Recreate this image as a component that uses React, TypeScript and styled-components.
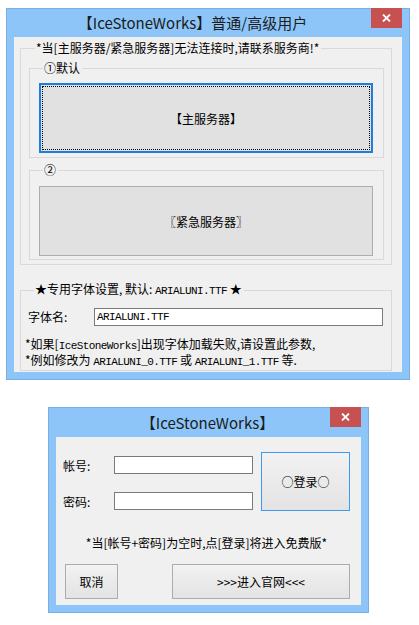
import styled, { createGlobalStyle, css } from 'styled-components';

/* -------- Global -------- */
const GlobalStyle = createGlobalStyle`
  body {
    margin: 0;
    background: #ffffff;
    font-family: "Noto Sans CJK SC", "Noto Sans", sans-serif;
    font-size: 12px;
    color: #000000;
  }
`;

/* -------- Window frame -------- */
const Page = styled.div`
  display: flex;
  flex-direction: column;
  align-items: flex-start;
  padding: 8px 0 0 6px;
`;

const Window = styled.div<{ $width: number; $height: number }>`
  box-sizing: border-box;
  width: ${p => p.$width}px;
  height: ${p => p.$height}px;
  display: flex;
  flex-direction: column;
  background: #8dc5f8;
  border: 1px solid #79b0e3;
  padding: 0 7px 7px 7px;
`;

const LoginWindow = styled(Window)`
  margin: 27px 0 0 42px;
`;

const TitleBar = styled.div<{ $height: number }>`
  display: flex;
  height: ${p => p.$height}px;
  flex-shrink: 0;
`;

const Title = styled.div<{ $offset?: number }>`
  flex: 1;
  align-self: center;
  text-align: center;
  padding-left: ${p => p.$offset || 0}px;
  font-size: 15px;
  line-height: 18px;
  color: #1c1c1c;
`;

const CloseButton = styled.div`
  width: 31px;
  height: 20px;
  margin-top: -1px;
  background: #c75050;
  display: flex;
  align-items: center;
  justify-content: center;
  & svg {
    width: 9px;
    height: 8px;
  }
`;

const MainClient = styled.div`
  flex: 1;
  background: #f0f0f0;
  padding: 4px 10px 0 6px;
  display: flex;
  flex-direction: column;
`;

const LoginClient = styled.div`
  flex: 1;
  background: #f0f0f0;
  padding: 15px 11px 0 7px;
  display: flex;
  flex-direction: column;
`;

/* -------- Group boxes -------- */
const Group = styled.fieldset<{ $pad: string; $gap?: number }>`
  margin: ${p => p.$gap || 0}px 0 0 0;
  padding: ${p => p.$pad};
  border: 1px solid #d9d9d9;
  min-width: 0;
  display: flex;
  flex-direction: column;
`;

const Legend = styled.legend<{ $indent?: number }>`
  margin-left: ${p => p.$indent ?? 6}px;
  padding: 0 2px 0 1px;
  font-size: 12px;
  line-height: 14px;
`;

const Mono = styled.span`
  font-family: "Liberation Mono", monospace;
  font-size: 11px;
  letter-spacing: -0.6px;
`;

/* -------- Buttons -------- */
const ServerButton = styled.button<{ $focused?: boolean }>`
  box-sizing: border-box;
  width: 100%;
  height: 70px;
  margin: 0;
  padding: 0;
  display: flex;
  align-items: center;
  justify-content: center;
  background: #e1e1e1;
  border: 1px solid #adadad;
  font-family: "Noto Sans CJK SC", sans-serif;
  font-size: 12px;
  color: #000000;
  ${p => p.$focused && css`
    border: 2px solid #1f7fd8;
    outline: 1px dotted #000000;
    outline-offset: -4px;
  `}
`;

const FormButton = styled.button<{ $width: number; $height: number; $default?: boolean }>`
  box-sizing: border-box;
  width: ${p => p.$width}px;
  height: ${p => p.$height}px;
  margin: 0;
  padding: 0;
  display: flex;
  align-items: center;
  justify-content: center;
  background: linear-gradient(#f2f2f2, #e3e3e3);
  border: 1px solid ${p => p.$default ? '#3d9bef' : '#acacac'};
  font-family: "Noto Sans CJK SC", sans-serif;
  font-size: 12px;
  color: #000000;
`;

/* -------- Font settings -------- */
const FontRow = styled.div`
  display: flex;
  align-items: center;
`;

const FontLabel = styled.span`
  width: 66px;
  line-height: 14px;
`;

const TextBox = styled.input<{ $width?: number; $mono?: boolean }>`
  box-sizing: border-box;
  height: 18px;
  margin: 0;
  padding: 0 2px;
  border: 1px solid #7a7a7a;
  background: #ffffff;
  outline: none;
  font-family: ${p => p.$mono ? '"Liberation Mono", monospace' : '"Noto Sans CJK SC", sans-serif'};
  font-size: ${p => p.$mono ? '11px' : '12px'};
  letter-spacing: ${p => p.$mono ? '-0.6px' : 'normal'};
  color: #000000;
  ${p => p.$width ? `width: ${p.$width}px;` : 'flex: 1;'}
`;

const Notes = styled.div`
  margin: 11px 0 0 -3px;
  line-height: 13px;
  white-space: nowrap;
`;

/* -------- Login form -------- */
const LoginRow = styled.div`
  display: flex;
  align-items: flex-start;
`;

const Fields = styled.div`
  display: flex;
  flex-direction: column;
  gap: 18px;
  margin: 4px 8px 0 0;
`;

const Field = styled.div`
  display: flex;
  align-items: center;
`;

const FieldLabel = styled.span`
  width: 51px;
  font-size: 12px;
`;

const Notice = styled.div`
  margin-top: 25px;
  text-align: center;
  line-height: 14px;
`;

const ActionRow = styled.div`
  display: flex;
  justify-content: space-between;
  margin: 14px 0 0 2px;
`;

function CloseIcon() {
  return (
    <svg viewBox="0 0 9 8">
      <path d="M1 0.5 L8 7.5 M8 0.5 L1 7.5" stroke="#ffffff" strokeWidth="1.8" />
    </svg>
  );
}

function App() {
  return (
    <Page>
      <GlobalStyle />
      <Window $width={404} $height={372}>
        <TitleBar $height={28}>
          <Title>【IceStoneWorks】普通/高级用户</Title>
          <CloseButton><CloseIcon /></CloseButton>
        </TitleBar>
        <MainClient>
          <Group $pad="6px 7px 4px 8px">
            <Legend>*当[主服务器/紧急服务器]无法连接时,请联系服务商!*</Legend>
            <Group $pad="8px 10px 4px 9px">
              <Legend $indent={4}>①默认</Legend>
              <ServerButton $focused>【主服务器】</ServerButton>
            </Group>
            <Group $pad="9px 10px 3px 9px" $gap={5}>
              <Legend $indent={4}>②</Legend>
              <ServerButton>〖紧急服务器〗</ServerButton>
            </Group>
          </Group>
          <Group $pad="10px 8px 1px 7px" $gap={17}>
            <Legend>★专用字体设置, 默认: <Mono>ARIALUNI.TTF</Mono> ★</Legend>
            <FontRow>
              <FontLabel>字体名:</FontLabel>
              <TextBox $mono readOnly value="ARIALUNI.TTF" />
            </FontRow>
            <Notes>
              *如果[<Mono>IceStoneWorks</Mono>]出现字体加载失败,请设置此参数,
              <br />
              *例如修改为 <Mono>ARIALUNI_0.TTF</Mono> 或 <Mono>ARIALUNI_1.TTF</Mono> 等.
            </Notes>
          </Group>
        </MainClient>
      </Window>

      <LoginWindow $width={321} $height={206}>
        <TitleBar $height={29}>
          <Title $offset={29}>【IceStoneWorks】</Title>
          <CloseButton><CloseIcon /></CloseButton>
        </TitleBar>
        <LoginClient>
          <LoginRow>
            <Fields>
              <Field>
                <FieldLabel>帐号:</FieldLabel>
                <TextBox $width={139} readOnly value="" />
              </Field>
              <Field>
                <FieldLabel>密码:</FieldLabel>
                <TextBox $width={139} readOnly value="" />
              </Field>
            </Fields>
            <FormButton $width={91} $height={59} $default>○登录○</FormButton>
          </LoginRow>
          <Notice>*当[帐号+密码]为空时,点[登录]将进入免费版*</Notice>
          <ActionRow>
            <FormButton $width={53} $height={35}>取消</FormButton>
            <FormButton $width={178} $height={35}>&gt;&gt;&gt;进入官网&lt;&lt;&lt;</FormButton>
          </ActionRow>
        </LoginClient>
      </LoginWindow>
    </Page>
  );
}

export default App;
